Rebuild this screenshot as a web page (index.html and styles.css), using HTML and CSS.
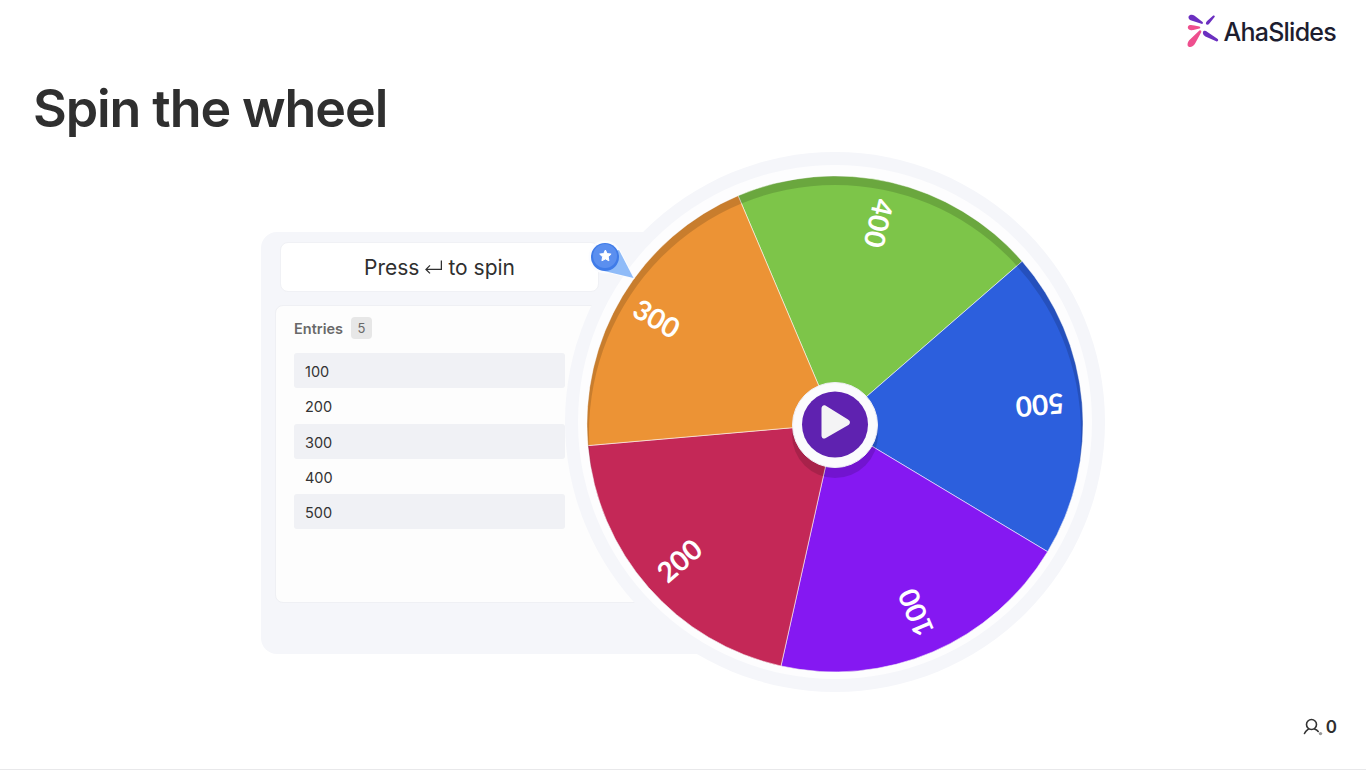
FILE: index.html
```html
<!DOCTYPE html>
<html lang="en">
<head>
<meta charset="utf-8">
<title>Spin the wheel</title>
<link rel="stylesheet" href="styles.css">
</head>
<body>
<main class="slide">
  <header class="brand">
    <svg class="brand-mark" viewBox="0 1 34 36" width="34" height="36" aria-hidden="true">
      <path d="M2.6 3.6C3.6 1.2 6.6 1.2 8.6 2.8L16.6 9C17.6 10 16.6 11.2 15.4 10.8L5.4 7.6C3.4 7 2 5.4 2.6 3.6Z" fill="#6b2fc0"/>
      <path d="M27.2 2.6C28.4 2 29.2 3 28.6 4L23.4 10.6C22.4 12 20.6 12.2 20 11C19.6 10 20.4 8.8 21.4 7.8Z" fill="#6b2fc0"/>
      <path d="M2 13.4C3 11.6 6 12 8.4 12.6L13.4 13.4C14.6 13.8 14.6 15.4 13.4 15.6L7.4 17C4.4 17.6 1 16 2 13.4Z" fill="#ee4f8e"/>
      <path d="M13.4 17.4C14.6 16.8 15.8 18 15.2 19.2L9.4 30C7.6 33.6 4 34.8 2.4 33.4C.8 32 1.6 28.6 4 26.4Z" fill="#ee4f8e"/>
      <path d="M17.6 18C18.8 17.4 20.2 18 21.4 19L31.4 25.8C33 27 32 29 30.2 28.2L19.4 23.4C17 22.2 16.2 19.2 17.6 18Z" fill="#6b2fc0"/>
    </svg>
    <span class="brand-name">AhaSlides</span>
  </header>

  <h1 class="title">Spin the wheel</h1>

  <section class="card">
    <div class="prompt">
      <span>Press</span>
      <svg class="enter" viewBox="0 0 17 14" width="17" height="14" aria-hidden="true">
        <path d="M16.4 .4V9.4H1M5 5.4L1 9.4L5 13.4" fill="none" stroke="#2f2f2f" stroke-width="1.3"/>
      </svg>
      <span>to spin</span>
    </div>
    <div class="entries">
      <div class="entries-head">
        <span class="entries-label">Entries</span>
        <span class="entries-count">5</span>
      </div>
      <ul class="entry-list">
        <li class="entry entry-alt">100</li>
        <li class="entry">200</li>
        <li class="entry entry-alt">300</li>
        <li class="entry">400</li>
        <li class="entry entry-alt">500</li>
      </ul>
    </div>
  </section>

  <svg class="wheel" viewBox="560 150 550 545" width="550" height="545" aria-label="Prize wheel">
    <defs>
      <clipPath id="wheel-clip"><circle cx="835" cy="424" r="248"/></clipPath>
    </defs>
    <circle cx="835" cy="422" r="270" fill="#f5f6fa"/>
    <circle cx="835" cy="422" r="257" fill="#fdfdfe"/>

    <g class="slices">
      <path d="M835 424L738.1 195.7A248 248 0 0 1 1022.2 261.3Z" fill="#7dc549"/>
      <path d="M835 424L1022.2 261.3A248 248 0 0 1 1047.6 551.7Z" fill="#2c5fdd"/>
      <path d="M835 424L1047.6 551.7A248 248 0 0 1 781 666Z" fill="#8518f2"/>
      <path d="M835 424L781 666A248 248 0 0 1 587.9 445.6Z" fill="#c42857"/>
      <path d="M835 424L587.9 445.6A248 248 0 0 1 738.1 195.7Z" fill="#ec9335"/>
    </g>
    <path clip-path="url(#wheel-clip)" fill-rule="evenodd" fill="#000" fill-opacity=".15"
      d="M587 424a248 248 0 1 0 496 0a248 248 0 1 0 -496 0ZM589 433a246 248 0 1 0 492 0a246 248 0 1 0 -492 0Z"/>

    <g class="labels">
      <text class="label" transform="translate(879.5 223.5) rotate(103)">400</text>
      <text class="label" transform="translate(1040 406) rotate(175)">500</text>
      <text class="label" transform="translate(915 613) rotate(247)">100</text>
      <text class="label" transform="translate(679 560) rotate(319)">200</text>
      <text class="label" transform="translate(657 318) rotate(31)">300</text>
    </g>

    <circle cx="835" cy="435" r="43" fill="#000" fill-opacity=".14"/>
    <circle cx="835" cy="425" r="42.5" fill="#fbfbfd" stroke="#eeeef5" stroke-width="1"/>
    <circle cx="835" cy="424.5" r="33" fill="#5f22b0"/>
    <path d="M821.5 408.6C821.5 406 823.6 404.6 825.8 405.8L848 419.4C850.6 421 850.6 423.6 848 425.2L825.8 438C823.6 439.4 821.5 438 821.5 435.4Z" fill="#f4f4f5"/>

    <circle cx="605" cy="257" r="16.5" fill="#fbfcff"/>
    <path d="M592 258L619 250L633.5 278L604 271Z" fill="#8fbbf8" stroke="#fbfcff" stroke-width="2" stroke-linejoin="round" paint-order="stroke"/>
    <circle cx="605" cy="257" r="14" fill="#3f7be8"/>
    <circle cx="605" cy="256" r="12" fill="#5b8fef"/>
    <path d="M606 250.4l1.7 3.6 4 .5-2.9 2.7.7 4-3.5-1.9-3.5 1.9.7-4-2.9-2.7 4-.5Z" fill="#fff" stroke="#fff" stroke-width="1" stroke-linejoin="round" transform="translate(-.6 -.4)"/>
  </svg>

  <footer class="audience">
    <svg class="audience-icon" viewBox="0 0 20 18" width="20" height="18" aria-hidden="true">
      <circle cx="8.5" cy="6.5" r="5" fill="none" stroke="#333" stroke-width="1.6"/>
      <path d="M1.5 15.5C3 12.6 5 11.6 5.6 11M15.2 13.5C14.4 12.4 13 11.6 11.6 11" fill="none" stroke="#333" stroke-width="1.6" stroke-linecap="round"/>
      <circle cx="17.5" cy="15.6" r="1.7" fill="#999"/>
    </svg>
    <span class="audience-count">0</span>
  </footer>
</main>
</body>
</html>
```
FILE: styles.css
```css
* { box-sizing: border-box; }

html, body {
  margin: 0;
  height: 770px;
  background: #fff;
}

body {
  font-family: "Inter", "Liberation Sans", sans-serif;
  color: #2f2f2f;
  overflow: hidden;
}

.slide {
  position: relative;
  width: 1366px;
  height: 770px;
  padding: 14px 30px 0 34px;
  border-bottom: 1px solid #e8e8ea;
  display: flex;
  flex-direction: column;
}

.brand {
  align-self: flex-end;
  display: flex;
  align-items: center;
  gap: 3px;
  height: 36px;
}

.brand-name {
  font-size: 25px;
  font-weight: 500;
  letter-spacing: -.75px;
  color: #1d1d2f;
}

.title {
  margin: 27px 0 0 -1px;
  font-size: 52px;
  line-height: 64px;
  font-weight: 600;
  letter-spacing: -1.1px;
  color: #2f2f2f;
}

.card {
  margin: 91px 0 0 227px;
  width: 460px;
  height: 422px;
  padding: 10px 0 0 14px;
  background: #f5f6fa;
  border-radius: 16px;
}

.prompt {
  margin-left: 5px;
  width: 319px;
  height: 50px;
  background: #fff;
  border: 1px solid #f0f1f5;
  border-radius: 8px;
  display: flex;
  align-items: center;
  justify-content: center;
  gap: 6px;
  font-size: 21px;
  font-weight: 400;
}

.entries {
  margin-top: 13px;
  width: 420px;
  height: 298px;
  padding: 11px 18px;
  background: #fdfdfd;
  border: 1px solid #eff0f4;
  border-radius: 8px;
}

.entries-head {
  display: flex;
  align-items: center;
  gap: 8px;
  height: 22px;
  color: #696969;
  font-size: 14.5px;
  font-weight: 600;
}

.entries-count {
  width: 21px;
  height: 22px;
  display: flex;
  align-items: center;
  justify-content: center;
  background: #e7e7e7;
  border-radius: 4px;
  font-size: 13px;
  font-weight: 400;
}

.entry-list {
  list-style: none;
  margin: 14px 0 0;
  padding: 0;
  width: 271px;
}

.entry {
  height: 35.25px;
  padding: 2px 0 0 11px;
  display: flex;
  align-items: center;
  font-size: 14.5px;
  color: #333;
}

.entry-alt {
  background: #f0f1f5;
  border-radius: 3px;
}

/* The wheel overlaps the card and its place is the canvas itself. */
.wheel {
  position: absolute;
  left: 560px;
  top: 150px;
}

.label {
  font-family: "Lato", sans-serif;
  font-size: 28px;
  font-weight: 700;
  fill: #fff;
  text-anchor: middle;
  dominant-baseline: central;
}

.slices path {
  stroke: #fff;
  stroke-opacity: .55;
  stroke-width: 1;
}

.audience {
  position: absolute;
  right: 29px;
  bottom: 32px;
  display: flex;
  align-items: center;
  gap: 3px;
}

.audience-count {
  font-size: 17px;
  font-weight: 600;
}
```
